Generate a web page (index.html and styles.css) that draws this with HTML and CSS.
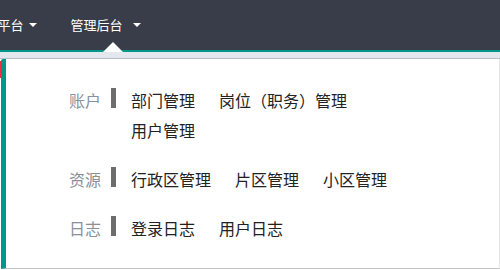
FILE: index.html
```html
<!DOCTYPE html>
<html lang="zh-CN">
<head>
<meta charset="utf-8">
<title>管理后台</title>
<link rel="stylesheet" href="styles.css">
</head>
<body>
<header class="nav">
  <div class="nav-item nav-first">工作平台<span class="caret caret-tight"></span></div>
  <div class="nav-item nav-active">管理后台<span class="caret"></span><span class="pointer"></span></div>
</header>
<div class="subbar"></div>
<div class="stage">
  <div class="panel">
    <div class="group">
      <div class="label">账户</div>
      <div class="bar"></div>
      <div class="items">
        <a class="item">部门管理</a>
        <a class="item">岗位（职务）管理</a>
        <a class="item">用户管理</a>
      </div>
    </div>
    <div class="group">
      <div class="label">资源</div>
      <div class="bar"></div>
      <div class="items">
        <a class="item">行政区管理</a>
        <a class="item">片区管理</a>
        <a class="item">小区管理</a>
      </div>
    </div>
    <div class="group">
      <div class="label">日志</div>
      <div class="bar"></div>
      <div class="items">
        <a class="item">登录日志</a>
        <a class="item">用户日志</a>
      </div>
    </div>
  </div>
</div>
</body>
</html>
```
FILE: styles.css
```css
html, body {
  margin: 0;
  padding: 0;
  background: #ffffff;
  font-family: "Noto Sans CJK SC", "Noto Sans", sans-serif;
  overflow: hidden;
}

.nav {
  height: 50px;
  background: #393d49;
  border-bottom: 2px solid #009688;
  display: flex;
  align-items: stretch;
  white-space: nowrap;
}

.nav-item {
  position: relative;
  display: flex;
  align-items: center;
  color: #ffffff;
  font-size: 13px;
  line-height: 50px;
}

.nav-first {
  margin-left: -28.5px;
}

.nav-active {
  margin-left: 34px;
}

.caret {
  display: inline-block;
  width: 0;
  height: 0;
  margin-left: 10px;
  border-left: 4px solid transparent;
  border-right: 4px solid transparent;
  border-top: 4px solid #ffffff;
}

.caret-tight {
  margin-left: 5px;
}

.pointer {
  position: absolute;
  left: 32px;
  bottom: -2px;
  width: 0;
  height: 0;
  border-left: 10px solid transparent;
  border-right: 10px solid transparent;
  border-bottom: 10px solid #ffffff;
}

.subbar {
  height: 6px;
  background: #e2e8ed;
  border-bottom: 1px solid #b7bec7;
}

.stage {
  padding-left: 1px;
  background: linear-gradient(#e8313a, #e8313a) 0 2px / 1px 17px no-repeat;
}

.panel {
  height: 210px;
  box-sizing: border-box;
  background: #ffffff;
  border-left: 5px solid #009688;
  border-right: 1px solid #e4e4e4;
  border-bottom: 1px solid #c4c4c4;
  border-radius: 2px 0 0 0;
  padding-top: 26px;
}

.group {
  display: flex;
  align-items: flex-start;
  margin-bottom: 19px;
}

.label {
  width: 95px;
  text-align: right;
  font-size: 16px;
  line-height: 30px;
  color: #8a909a;
}

.bar {
  width: 5px;
  height: 20px;
  margin: 3px 15px 0 10px;
  background: #6d6d6d;
}

.items {
  width: 280px;
  display: flex;
  flex-wrap: wrap;
  column-gap: 24px;
}

.item {
  font-size: 16px;
  line-height: 30px;
  color: #222222;
  text-decoration: none;
}
```
